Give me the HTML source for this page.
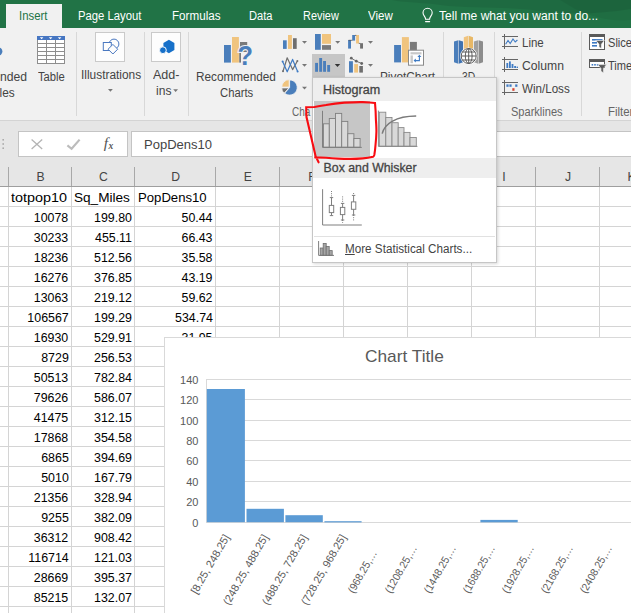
<!DOCTYPE html>
<html><head><meta charset="utf-8"><title>Excel Histogram</title>
<style>
html,body{margin:0;padding:0;}
body{width:631px;height:613px;overflow:hidden;position:relative;background:#fff;font-family:'Liberation Sans',sans-serif;}
#root{position:absolute;left:0;top:0;width:631px;height:613px;overflow:hidden;background:#fff;}
.t{position:absolute;white-space:nowrap;line-height:1;}
.abs{position:absolute;}
svg{position:absolute;left:0;top:0;overflow:visible;}
</style></head><body><div id="root">

<!-- ===== GRID ===== -->
<div id="grid" class="abs" style="left:0;top:0;width:631px;height:613px;">
  <div class="abs" style="left:0;top:121px;width:631px;height:65px;background:#e6e6e6;"></div>
  <svg width="631" height="613" shape-rendering="crispEdges">
    <!-- header separators -->
    <g fill="#a8a8a8">
      <rect x="8" y="167" width="1" height="19"/><rect x="71" y="167" width="1" height="19"/><rect x="134" y="167" width="1" height="19"/>
      <rect x="215" y="167" width="1" height="19"/><rect x="279" y="167" width="1" height="19"/><rect x="343" y="167" width="1" height="19"/>
      <rect x="407" y="167" width="1" height="19"/><rect x="471" y="167" width="1" height="19"/><rect x="535" y="167" width="1" height="19"/><rect x="599" y="167" width="1" height="19"/>
    </g>
    <rect x="0" y="186" width="631" height="1" fill="#9e9e9e"/>
    <!-- vertical grid lines -->
    <g fill="#d4d4d4">
      <rect x="8" y="187" width="1" height="426"/><rect x="71" y="187" width="1" height="426"/><rect x="134" y="187" width="1" height="426"/>
      <rect x="215" y="187" width="1" height="426"/><rect x="279" y="187" width="1" height="426"/><rect x="343" y="187" width="1" height="426"/>
      <rect x="407" y="187" width="1" height="426"/><rect x="471" y="187" width="1" height="426"/><rect x="535" y="187" width="1" height="426"/><rect x="599" y="187" width="1" height="426"/>
      <rect x="0" y="206" width="631" height="1"/><rect x="0" y="226" width="631" height="1"/><rect x="0" y="246" width="631" height="1"/><rect x="0" y="266" width="631" height="1"/><rect x="0" y="286" width="631" height="1"/><rect x="0" y="306" width="631" height="1"/><rect x="0" y="326" width="631" height="1"/><rect x="0" y="346" width="631" height="1"/><rect x="0" y="366" width="631" height="1"/><rect x="0" y="386" width="631" height="1"/><rect x="0" y="406" width="631" height="1"/><rect x="0" y="426" width="631" height="1"/><rect x="0" y="446" width="631" height="1"/><rect x="0" y="466" width="631" height="1"/><rect x="0" y="486" width="631" height="1"/><rect x="0" y="506" width="631" height="1"/><rect x="0" y="526" width="631" height="1"/><rect x="0" y="546" width="631" height="1"/><rect x="0" y="566" width="631" height="1"/><rect x="0" y="586" width="631" height="1"/><rect x="0" y="606" width="631" height="1"/>
    </g>
  </svg>
  <span class="t" style="font-size:12.2px;color:#444;left:-9.50px;width:100px;text-align:center;top:171.00px;">B</span>
<span class="t" style="font-size:12.2px;color:#444;left:53.50px;width:100px;text-align:center;top:171.00px;">C</span>
<span class="t" style="font-size:12.2px;color:#444;left:125.70px;width:100px;text-align:center;top:171.00px;">D</span>
<span class="t" style="font-size:12.2px;color:#444;left:197.80px;width:100px;text-align:center;top:171.00px;">E</span>
<span class="t" style="font-size:12.2px;color:#444;left:262.00px;width:100px;text-align:center;top:171.00px;">F</span>
<span class="t" style="font-size:12.2px;color:#444;left:326.00px;width:100px;text-align:center;top:171.00px;">G</span>
<span class="t" style="font-size:12.2px;color:#444;left:390.00px;width:100px;text-align:center;top:171.00px;">H</span>
<span class="t" style="font-size:12.2px;color:#444;left:454.00px;width:100px;text-align:center;top:171.00px;">I</span>
<span class="t" style="font-size:12.2px;color:#444;left:518.00px;width:100px;text-align:center;top:171.00px;">J</span>
<span class="t" style="font-size:12.2px;color:#444;left:581.70px;width:100px;text-align:center;top:171.00px;">K</span>
<span class="t" style="font-size:13.4px;color:#000;left:11.40px;top:191.00px;transform-origin:0 0;transform:scaleX(1.0731);">totpop10</span>
<span class="t" style="font-size:13.4px;color:#000;left:73.50px;top:191.00px;transform-origin:0 0;transform:scaleX(1.0145);">Sq_Miles</span>
<span class="t" style="font-size:13.4px;color:#000;left:137.70px;top:191.00px;transform-origin:0 0;transform:scaleX(0.9814);">PopDens10</span>
<span class="t" style="font-size:13.4px;color:#000;right:562.40px;top:211.00px;transform-origin:100% 0;transform:scaleX(0.9250);">10078</span>
<span class="t" style="font-size:13.4px;color:#000;right:499.20px;top:211.00px;transform-origin:100% 0;transform:scaleX(0.9250);">199.80</span>
<span class="t" style="font-size:13.4px;color:#000;right:418.00px;top:211.00px;transform-origin:100% 0;transform:scaleX(0.9250);">50.44</span>
<span class="t" style="font-size:13.4px;color:#000;right:562.40px;top:231.00px;transform-origin:100% 0;transform:scaleX(0.9250);">30233</span>
<span class="t" style="font-size:13.4px;color:#000;right:499.20px;top:231.00px;transform-origin:100% 0;transform:scaleX(0.9250);">455.11</span>
<span class="t" style="font-size:13.4px;color:#000;right:418.00px;top:231.00px;transform-origin:100% 0;transform:scaleX(0.9250);">66.43</span>
<span class="t" style="font-size:13.4px;color:#000;right:562.40px;top:251.00px;transform-origin:100% 0;transform:scaleX(0.9250);">18236</span>
<span class="t" style="font-size:13.4px;color:#000;right:499.20px;top:251.00px;transform-origin:100% 0;transform:scaleX(0.9250);">512.56</span>
<span class="t" style="font-size:13.4px;color:#000;right:418.00px;top:251.00px;transform-origin:100% 0;transform:scaleX(0.9250);">35.58</span>
<span class="t" style="font-size:13.4px;color:#000;right:562.40px;top:271.00px;transform-origin:100% 0;transform:scaleX(0.9250);">16276</span>
<span class="t" style="font-size:13.4px;color:#000;right:499.20px;top:271.00px;transform-origin:100% 0;transform:scaleX(0.9250);">376.85</span>
<span class="t" style="font-size:13.4px;color:#000;right:418.00px;top:271.00px;transform-origin:100% 0;transform:scaleX(0.9250);">43.19</span>
<span class="t" style="font-size:13.4px;color:#000;right:562.40px;top:291.00px;transform-origin:100% 0;transform:scaleX(0.9250);">13063</span>
<span class="t" style="font-size:13.4px;color:#000;right:499.20px;top:291.00px;transform-origin:100% 0;transform:scaleX(0.9250);">219.12</span>
<span class="t" style="font-size:13.4px;color:#000;right:418.00px;top:291.00px;transform-origin:100% 0;transform:scaleX(0.9250);">59.62</span>
<span class="t" style="font-size:13.4px;color:#000;right:562.40px;top:311.00px;transform-origin:100% 0;transform:scaleX(0.9250);">106567</span>
<span class="t" style="font-size:13.4px;color:#000;right:499.20px;top:311.00px;transform-origin:100% 0;transform:scaleX(0.9250);">199.29</span>
<span class="t" style="font-size:13.4px;color:#000;right:418.00px;top:311.00px;transform-origin:100% 0;transform:scaleX(0.9250);">534.74</span>
<span class="t" style="font-size:13.4px;color:#000;right:562.40px;top:331.00px;transform-origin:100% 0;transform:scaleX(0.9250);">16930</span>
<span class="t" style="font-size:13.4px;color:#000;right:499.20px;top:331.00px;transform-origin:100% 0;transform:scaleX(0.9250);">529.91</span>
<span class="t" style="font-size:13.4px;color:#000;right:418.00px;top:331.00px;transform-origin:100% 0;transform:scaleX(0.9250);">31.95</span>
<span class="t" style="font-size:13.4px;color:#000;right:562.40px;top:351.00px;transform-origin:100% 0;transform:scaleX(0.9250);">8729</span>
<span class="t" style="font-size:13.4px;color:#000;right:499.20px;top:351.00px;transform-origin:100% 0;transform:scaleX(0.9250);">256.53</span>
<span class="t" style="font-size:13.4px;color:#000;right:562.40px;top:371.00px;transform-origin:100% 0;transform:scaleX(0.9250);">50513</span>
<span class="t" style="font-size:13.4px;color:#000;right:499.20px;top:371.00px;transform-origin:100% 0;transform:scaleX(0.9250);">782.84</span>
<span class="t" style="font-size:13.4px;color:#000;right:562.40px;top:391.00px;transform-origin:100% 0;transform:scaleX(0.9250);">79626</span>
<span class="t" style="font-size:13.4px;color:#000;right:499.20px;top:391.00px;transform-origin:100% 0;transform:scaleX(0.9250);">586.07</span>
<span class="t" style="font-size:13.4px;color:#000;right:562.40px;top:411.00px;transform-origin:100% 0;transform:scaleX(0.9250);">41475</span>
<span class="t" style="font-size:13.4px;color:#000;right:499.20px;top:411.00px;transform-origin:100% 0;transform:scaleX(0.9250);">312.15</span>
<span class="t" style="font-size:13.4px;color:#000;right:562.40px;top:431.00px;transform-origin:100% 0;transform:scaleX(0.9250);">17868</span>
<span class="t" style="font-size:13.4px;color:#000;right:499.20px;top:431.00px;transform-origin:100% 0;transform:scaleX(0.9250);">354.58</span>
<span class="t" style="font-size:13.4px;color:#000;right:562.40px;top:451.00px;transform-origin:100% 0;transform:scaleX(0.9250);">6865</span>
<span class="t" style="font-size:13.4px;color:#000;right:499.20px;top:451.00px;transform-origin:100% 0;transform:scaleX(0.9250);">394.69</span>
<span class="t" style="font-size:13.4px;color:#000;right:562.40px;top:471.00px;transform-origin:100% 0;transform:scaleX(0.9250);">5010</span>
<span class="t" style="font-size:13.4px;color:#000;right:499.20px;top:471.00px;transform-origin:100% 0;transform:scaleX(0.9250);">167.79</span>
<span class="t" style="font-size:13.4px;color:#000;right:562.40px;top:491.00px;transform-origin:100% 0;transform:scaleX(0.9250);">21356</span>
<span class="t" style="font-size:13.4px;color:#000;right:499.20px;top:491.00px;transform-origin:100% 0;transform:scaleX(0.9250);">328.94</span>
<span class="t" style="font-size:13.4px;color:#000;right:562.40px;top:511.00px;transform-origin:100% 0;transform:scaleX(0.9250);">9255</span>
<span class="t" style="font-size:13.4px;color:#000;right:499.20px;top:511.00px;transform-origin:100% 0;transform:scaleX(0.9250);">382.09</span>
<span class="t" style="font-size:13.4px;color:#000;right:562.40px;top:531.00px;transform-origin:100% 0;transform:scaleX(0.9250);">36312</span>
<span class="t" style="font-size:13.4px;color:#000;right:499.20px;top:531.00px;transform-origin:100% 0;transform:scaleX(0.9250);">908.42</span>
<span class="t" style="font-size:13.4px;color:#000;right:562.40px;top:551.00px;transform-origin:100% 0;transform:scaleX(0.9250);">116714</span>
<span class="t" style="font-size:13.4px;color:#000;right:499.20px;top:551.00px;transform-origin:100% 0;transform:scaleX(0.9250);">121.03</span>
<span class="t" style="font-size:13.4px;color:#000;right:562.40px;top:571.00px;transform-origin:100% 0;transform:scaleX(0.9250);">28669</span>
<span class="t" style="font-size:13.4px;color:#000;right:499.20px;top:571.00px;transform-origin:100% 0;transform:scaleX(0.9250);">395.37</span>
<span class="t" style="font-size:13.4px;color:#000;right:562.40px;top:591.00px;transform-origin:100% 0;transform:scaleX(0.9250);">85215</span>
<span class="t" style="font-size:13.4px;color:#000;right:499.20px;top:591.00px;transform-origin:100% 0;transform:scaleX(0.9250);">132.07</span>
</div>

<!-- ===== TITLE BAR + RIBBON ===== -->
<div id="ribbon" class="abs" style="left:0;top:0;width:631px;height:157px;">
  <div class="abs" style="left:0;top:0;width:631px;height:28px;background:#217346;"></div>
  <svg width="631" height="28"><path d="M392 0 L631 0 L631 9 C600 14 570 15 540 11 C505 6 470 9 440 5 C420 2 405 3 392 0 Z" fill="#000" opacity="0.07"/><path d="M560 0 L631 0 L631 20 C610 22 590 16 575 9 Z" fill="#000" opacity="0.05"/></svg>
  <div class="abs" style="left:6px;top:4px;width:56px;height:24px;background:#f1f1f1;"></div>
  <div class="abs" style="left:0;top:28px;width:631px;height:92px;background:#f1f1f1;"></div>
  <div class="abs" style="left:0;top:120px;width:631px;height:1px;background:#d4d4d4;"></div>
  <!-- formula bar boxes -->
  <div class="abs" style="left:18px;top:131px;width:108px;height:24px;background:#fff;border:1px solid #c4c4c4;"></div>
  <div class="abs" style="left:131px;top:131px;width:520px;height:24px;background:#fff;border:1px solid #c4c4c4;"></div>
  <svg width="631" height="160" id="ribicons">
  <!-- group separators -->
  <g fill="#d8d8d8" shape-rendering="crispEdges">
    <rect x="76" y="32" width="1" height="84"/><rect x="144" y="32" width="1" height="84"/><rect x="188" y="32" width="1" height="84"/>
    <rect x="443" y="32" width="1" height="84"/><rect x="494" y="32" width="1" height="84"/><rect x="581" y="32" width="1" height="84"/>
  </g>
  <!-- lightbulb -->
  <g fill="none" stroke="#fff" stroke-width="1.1" stroke-linecap="round">
    <path d="M425.6 19.2 C425.6 16.6 423 15.6 423 12.8 A4.6 4.6 0 0 1 432.2 12.8 C432.2 15.6 429.6 16.6 429.6 19.2 Z"/>
    <path d="M425.6 21.6 H429.6" stroke-width="1.2"/>
  </g>
  <!-- left cut circle -->
  <circle cx="-1.8" cy="51.5" r="4.2" fill="#4a7ebb"/>
  <!-- Table icon -->
  <g shape-rendering="crispEdges">
    <rect x="37" y="36" width="28" height="28" fill="#fff"/>
    <g fill="#8e8e8e">
      <rect x="37" y="40" width="1" height="24"/><rect x="46" y="40" width="1" height="24"/><rect x="55" y="40" width="1" height="24"/><rect x="64" y="40" width="1" height="24"/>
      <rect x="37" y="43" width="28" height="1"/><rect x="37" y="47" width="28" height="1"/><rect x="37" y="51" width="28" height="1"/><rect x="37" y="55" width="28" height="1"/><rect x="37" y="59" width="28" height="1"/><rect x="37" y="63" width="28" height="1"/>
    </g>
    <rect x="37" y="36" width="28" height="4" fill="#4676c2"/>
  </g>
  <g fill="#fff"><path d="M39.8 37.2h3.6l-1.8 2z"/><path d="M48.8 37.2h3.6l-1.8 2z"/><path d="M57.8 37.2h3.6l-1.8 2z"/></g>
  <!-- Illustrations box -->
  <rect x="95.5" y="32.5" width="29" height="29" fill="#fdfdfd" stroke="#cacaca"/>
  <g fill="#fdfdfd" stroke="#4a78c0" stroke-width="1">
    <circle cx="114" cy="44" r="4.9"/>
    <rect x="103.3" y="42.5" width="8" height="8"/>
    <path d="M112.9 44.4 L117.7 49.2 L112.9 54 L108.1 49.2 Z"/>
  </g>
  <!-- Add-ins box -->
  <rect x="151.5" y="32.5" width="29" height="29" fill="#fdfdfd" stroke="#cacaca"/>
  <path d="M168.9 39.8 L174.4 43.1 L174.4 50 L168.9 53.3 L163.4 50 L163.4 43.1 Z" fill="#1670c9"/>
  <circle cx="162.9" cy="50.2" r="3.4" fill="#1670c9" stroke="#fdfdfd" stroke-width="1"/>
  <!-- Recommended charts -->
  <g>
    <rect x="224" y="45" width="6.9" height="17.6" fill="#4a7ebb"/>
    <rect x="232" y="37" width="6.9" height="25.6" fill="#f0c47e"/>
    <rect x="240" y="42" width="7.2" height="10" fill="#7a7a7a"/>
    <rect x="239.2" y="52" width="1.8" height="10.6" fill="#7a7a7a"/>
    <text x="237.6" y="65.3" font-family="'Liberation Sans',sans-serif" font-weight="bold" font-size="27.5" fill="#4a7ebb" stroke="#f1f1f1" stroke-width="2.2" paint-order="stroke" textLength="15.5" lengthAdjust="spacingAndGlyphs">?</text>
  </g>
  <!-- column icon -->
  <rect x="283" y="40.3" width="3.7" height="8.6" fill="#4a7ebb"/><rect x="288" y="35" width="3.9" height="13.9" fill="#f0c47e"/><rect x="293" y="38.2" width="3.7" height="10.7" fill="#6f6f6f"/>
  <!-- hierarchy icon -->
  <rect x="315" y="34" width="5.8" height="15.8" fill="#4a7ebb"/><rect x="322" y="34" width="9" height="9.8" fill="#f0c47e"/><rect x="322" y="45.1" width="9" height="4.7" fill="#7a7a7a"/>
  <!-- waterfall icon -->
  <rect x="348.1" y="40" width="2.9" height="8.6" fill="#4a7ebb"/><rect x="352.2" y="35" width="2.9" height="5.6" fill="#4a7ebb"/>
  <rect x="356.1" y="35" width="2.9" height="8.5" fill="#f0c47e"/><rect x="360.1" y="43.2" width="2.9" height="5.4" fill="#6f6f6f"/>
  <path d="M348.6 40.3 H352.4 M355 35.4 H356.3 M358.8 43.4 H360.3" stroke="#555" stroke-width="0.8" fill="none"/>
  <!-- line icon -->
  <g fill="none" stroke-width="1.2" stroke-linejoin="round">
    <path d="M283 71.2 L287.2 57.8 L292.6 69.6 L297.4 61" stroke="#6f6f6f"/>
    <path d="M282.6 61.6 L287.2 71.8 L292.6 59.4 L297.6 71.4" stroke="#3f7bc4"/>
  </g>
  <g fill="#6f6f6f"><circle cx="283" cy="71.2" r="1"/><circle cx="297.4" cy="61" r="1"/></g>
  <g fill="#3f7bc4"><circle cx="282.6" cy="61.6" r="1"/><circle cx="297.6" cy="71.4" r="1"/></g>
  <!-- selected histogram button -->
  <rect x="312" y="54" width="33" height="24" fill="#c6c6c6" shape-rendering="crispEdges"/>
  <g fill="#4a7ebb"><rect x="315.1" y="62.9" width="2.9" height="8.9"/><rect x="319.2" y="58" width="2.9" height="13.8"/><rect x="323.1" y="61" width="2.9" height="10.8"/><rect x="327.2" y="65" width="2.9" height="6.8"/></g>
  <!-- combo icon -->
  <rect x="349" y="61.2" width="3.9" height="11.4" fill="#4a7ebb"/><rect x="354.2" y="64.1" width="3.8" height="8.5" fill="#f0c47e"/><rect x="359.3" y="66" width="3.6" height="6.6" fill="#6f6f6f"/>
  <path d="M351.3 58.2 L356.3 61.2 L361.7 63.5" stroke="#666" stroke-width="0.9" fill="none"/>
  <g fill="#666"><circle cx="351.3" cy="58.2" r="1.4"/><circle cx="356.3" cy="61.2" r="1.4"/><circle cx="361.7" cy="63.5" r="1.4"/></g>
  <!-- pie icon -->
  <g stroke="#f1f1f1" stroke-width="0.9">
    <path d="M289.6 87.5 L289.6 79.9 A7.6 7.6 0 1 1 284.6 93.2 Z" fill="#4a7ebb"/>
    <path d="M289.2 87.1 L281.7 87.1 A7.6 7.6 0 0 1 289.2 79.6 Z" fill="#f0c47e"/>
    <path d="M289 87.9 L284 93.3 A7.6 7.6 0 0 1 281.7 87.9 Z" fill="#6f6f6f"/>
  </g>
  <!-- dropdown arrows -->
  <g fill="#777">
    <path d="M302 41h5l-2.5 2.7z"/><path d="M335.2 41h5l-2.5 2.7z"/><path d="M368 41h5l-2.5 2.7z"/>
    <path d="M302 64h5l-2.5 2.7z"/><path d="M368 64h5l-2.5 2.7z"/>
    <path d="M302 86.7h5l-2.5 2.7z"/>
    <path d="M108 88.9h4.8l-2.4 2.9z"/><path d="M173.2 89.2h4.8l-2.4 2.9z"/>
  </g>
  <path d="M334.8 64h5.4l-2.7 3z" fill="#333"/>
  <!-- PivotChart icon -->
  <rect x="394.1" y="45" width="6.9" height="17.4" fill="#4a7ebb"/><rect x="401.9" y="37.1" width="7" height="25.3" fill="#f0c47e"/><rect x="409.9" y="41.9" width="7" height="9" fill="#7a7a7a"/>
  <rect x="408.5" y="50.2" width="15" height="15" fill="#fff" stroke="#8a8a8a" stroke-width="1"/>
  <rect x="410.5" y="52.2" width="11" height="2.2" fill="#c8c8c8"/><rect x="410.5" y="55.4" width="2.4" height="7.8" fill="#c8c8c8"/>
  <g fill="none" stroke="#3f7bc4" stroke-width="1.1">
    <path d="M414.6 60.6 H419.4 V55.8"/>
  </g>
  <path d="M417.4 57 L419.4 54.8 L421.4 57 Z M415.8 58.6 L413.6 60.6 L415.8 62.6 Z" fill="#3f7bc4"/>
  <!-- 3D map icon -->
  <g>
    <path d="M454 41.6 L458.3 40.2 V63.7 L454 62.2 Z" fill="#4a7ebb"/><path d="M458.8 40.2 L463 41.6 V62.2 L458.8 63.7 Z" fill="#3f72b0"/>
    <path d="M463.8 37.2 L468.2 35.8 V56 L463.8 56 Z" fill="#f0c47e"/><path d="M468.7 35.8 L473 37.2 V56 L468.7 56 Z" fill="#e8b866"/>
    <path d="M473.9 41.6 L478.2 40.2 V63.7 L473.9 62.2 Z" fill="#a0a0a0"/><path d="M478.7 40.2 L483 41.6 V62.2 L478.7 63.7 Z" fill="#8c8c8c"/>
    <circle cx="468.7" cy="56" r="8.6" fill="#fff"/>
    <g fill="none" stroke="#555" stroke-width="0.95">
      <circle cx="468.7" cy="56" r="7.5"/>
      <ellipse cx="468.7" cy="56" rx="3.4" ry="7.4"/>
      <path d="M468.7 48.6 V63.4 M461.3 56 H476.1 M462.6 52 H474.8 M462.6 60 H474.8"/>
    </g>
  </g>
  <!-- sparkline icons -->
  <g fill="none" stroke="#666" stroke-width="1" shape-rendering="crispEdges">
    <path d="M504.5 34 V49 M502 36.5 H518 M502 46.5 H518"/>
    <path d="M504.5 57 V72 M502 59.5 H518 M502 69.5 H518"/>
    <path d="M504.5 80 V95 M502 82.5 H518 M502 92.5 H518"/>
  </g>
  <path d="M505.6 44.2 L508 40.4 L510.2 43.6 L513 39 L515.2 42 L517.4 40" fill="none" stroke="#3f7bc4" stroke-width="1.1"/>
  <g fill="#3f7bc4"><rect x="506.4" y="63" width="1.8" height="5"/><rect x="509" y="61.4" width="1.8" height="6.6"/><rect x="511.6" y="64" width="1.8" height="4"/><rect x="514.2" y="66" width="1.8" height="2"/><rect x="516.6" y="66.6" width="1.4" height="1.4"/></g>
  <g fill="#3f7bc4"><rect x="506.4" y="84.4" width="2.2" height="2.4"/><rect x="509.4" y="84.4" width="2.2" height="2.4"/><rect x="515.2" y="84.4" width="2.2" height="2.4"/></g>
  <rect x="512.3" y="88.2" width="2.2" height="2.6" fill="#d9432f"/>
  <!-- slicer icon -->
  <rect x="589.5" y="34.5" width="15" height="15" fill="#fff" stroke="#5a5a5a"/>
  <rect x="589" y="34" width="16" height="3" fill="#5a5a5a"/>
  <g fill="#3f7bc4"><rect x="592" y="39" width="10.5" height="1.6"/><rect x="592" y="42" width="5" height="1.6"/><rect x="592" y="45" width="5" height="1.6"/></g>
  <path d="M595.8 40.4 H604.4 L601.4 44.2 V48.6 L599 47 V44.2 Z" fill="#5a5a5a" stroke="#fff" stroke-width="0.6"/>
  <!-- timeline icon -->
  <rect x="589.5" y="59.5" width="15" height="8" fill="#fff" stroke="#5a5a5a"/>
  <rect x="589" y="59" width="16" height="3" fill="#5a5a5a"/>
  <g fill="#3f7bc4"><rect x="591.6" y="64" width="1.6" height="1.6"/><rect x="594.2" y="64" width="1.6" height="1.6"/><rect x="596.8" y="64" width="1.6" height="1.6"/></g>
  <path d="M597.8 64.6 H606.6 L603.4 68.4 V72.8 L601 71.2 V68.4 Z" fill="#5a5a5a" stroke="#f1f1f1" stroke-width="0.6"/>
  <!-- formula bar icons -->
  <g fill="#ababab"><rect x="2.4" y="139" width="1.6" height="1.6"/><rect x="2.4" y="143.2" width="1.6" height="1.6"/><rect x="2.4" y="147.4" width="1.6" height="1.6"/></g>
  <path d="M31.6 139.6 L42.2 149 M42.2 139.6 L31.6 149" stroke="#b4b4b4" stroke-width="1.3" fill="none"/>
  <path d="M67.4 145.4 L71.6 148.8 L79.6 139.6" stroke="#bcbcbc" stroke-width="2.2" fill="none"/>
  <text x="103.8" y="148.2" font-family="'Liberation Serif',serif" font-style="italic" font-size="15.5" fill="#555">f</text>
  <text x="108.6" y="148.6" font-family="'Liberation Serif',serif" font-style="italic" font-size="9.5" fill="#555" font-weight="bold">x</text>
</svg>

  <span class="t" style="font-size:12.3px;color:#217346;left:19.30px;top:10.00px;transform-origin:0 0;transform:scaleX(0.9226);">Insert</span>
<span class="t" style="font-size:12.3px;color:#fff;left:77.50px;top:10.00px;transform-origin:0 0;transform:scaleX(0.9186);">Page Layout</span>
<span class="t" style="font-size:12.3px;color:#fff;left:171.70px;top:10.00px;transform-origin:0 0;transform:scaleX(0.9471);">Formulas</span>
<span class="t" style="font-size:12.3px;color:#fff;left:249.30px;top:10.00px;transform-origin:0 0;transform:scaleX(0.9038);">Data</span>
<span class="t" style="font-size:12.3px;color:#fff;left:302.60px;top:10.00px;transform-origin:0 0;transform:scaleX(0.8878);">Review</span>
<span class="t" style="font-size:12.3px;color:#fff;left:367.70px;top:10.00px;transform-origin:0 0;transform:scaleX(0.9370);">View</span>
<span class="t" style="font-size:12.3px;color:#fff;left:439.20px;top:10.00px;transform-origin:0 0;transform:scaleX(0.9826);">Tell me what you want to do...</span>
  <span class="t" style="font-size:12.3px;color:#444;left:-0.50px;top:71.00px;transform-origin:0 0;transform:scaleX(0.9889);">nded</span>
<span class="t" style="font-size:12.3px;color:#444;left:-6.60px;top:87.00px;transform-origin:0 0;transform:scaleX(0.9609);">bles</span>
<span class="t" style="font-size:12.3px;color:#444;left:37.50px;top:71.00px;transform-origin:0 0;transform:scaleX(0.9138);">Table</span>
<span class="t" style="font-size:12.3px;color:#444;left:80.50px;top:69.00px;transform-origin:0 0;transform:scaleX(0.9677);">Illustrations</span>
<span class="t" style="font-size:12.3px;color:#444;left:153.00px;top:69.00px;transform-origin:0 0;transform:scaleX(1.0192);">Add-</span>
<span class="t" style="font-size:12.3px;color:#444;left:155.50px;top:85.00px;transform-origin:0 0;transform:scaleX(0.9812);">ins</span>
<span class="t" style="font-size:12.3px;color:#444;left:195.50px;top:71.00px;transform-origin:0 0;transform:scaleX(0.9578);">Recommended</span>
<span class="t" style="font-size:12.3px;color:#444;left:219.50px;top:87.00px;transform-origin:0 0;transform:scaleX(0.9167);">Charts</span>
<span class="t" style="font-size:12.3px;color:#666;left:291.60px;top:106.00px;transform-origin:0 0;transform:scaleX(0.8130);">Cha</span>
<span class="t" style="font-size:12.3px;color:#444;left:380.30px;top:71.00px;transform-origin:0 0;transform:scaleX(0.9586);">PivotChart</span>
<span class="t" style="font-size:12.3px;color:#444;left:462.10px;top:71.00px;transform-origin:0 0;transform:scaleX(0.8375);">3D</span>
<span class="t" style="font-size:12.3px;color:#444;left:521.70px;top:37.00px;transform-origin:0 0;transform:scaleX(0.9348);">Line</span>
<span class="t" style="font-size:12.3px;color:#444;left:521.70px;top:60.00px;transform-origin:0 0;transform:scaleX(0.9905);">Column</span>
<span class="t" style="font-size:12.3px;color:#444;left:521.70px;top:83.00px;transform-origin:0 0;transform:scaleX(0.9431);">Win/Loss</span>
<span class="t" style="font-size:12.3px;color:#666;left:511.20px;top:106.00px;transform-origin:0 0;transform:scaleX(0.8983);">Sparklines</span>
<span class="t" style="font-size:12.3px;color:#666;left:607.80px;top:106.00px;transform-origin:0 0;transform:scaleX(0.9300);">Filters</span>
<span class="t" style="font-size:12.3px;color:#444;left:608.40px;top:37.00px;transform-origin:0 0;transform:scaleX(0.9000);">Slicer</span>
<span class="t" style="font-size:12.3px;color:#444;left:608.40px;top:60.00px;transform-origin:0 0;transform:scaleX(0.9000);">Timeline</span>
<span class="t" style="font-size:13.4px;color:#444;left:143.80px;top:138.00px;transform-origin:0 0;transform:scaleX(0.9729);">PopDens10</span>
</div>

<!-- ===== CHART ===== -->
<div id="chart" class="abs" style="left:164px;top:337px;width:480px;height:290px;background:#fff;border:1px solid #d9d9d9;"></div>
<svg width="631" height="613" shape-rendering="crispEdges">
  <g fill="#d9d9d9">
    <rect x="206" y="379" width="425" height="1"/><rect x="206" y="399" width="425" height="1"/><rect x="206" y="420" width="425" height="1"/>
    <rect x="206" y="440" width="425" height="1"/><rect x="206" y="460" width="425" height="1"/><rect x="206" y="481" width="425" height="1"/>
    <rect x="206" y="501" width="425" height="1"/><rect x="206" y="522" width="425" height="1"/><rect x="206" y="379" width="1" height="143"/>
  </g>
  <g fill="#5b9bd5" shape-rendering="geometricPrecision">
    <rect x="206.8" y="389" width="38.1" height="133.2"/>
    <rect x="246.5" y="508.8" width="37.4" height="13.4"/>
    <rect x="285.4" y="515.2" width="37.4" height="7"/>
    <rect x="324.4" y="521.2" width="37.2" height="1.2"/>
    <rect x="480.4" y="519.9" width="37.3" height="2.4"/>
  </g>
</svg>
<div class="abs" style="left:0;top:0;width:631px;height:613px;"><span class="t" style="font-size:17px;color:#595959;left:364.70px;top:348.00px;transform-origin:0 0;transform:scaleX(1.0169);">Chart Title</span>
<span class="t" style="font-size:11px;color:#595959;right:432.60px;top:375.00px;">140</span>
<span class="t" style="font-size:11px;color:#595959;right:432.60px;top:395.00px;">120</span>
<span class="t" style="font-size:11px;color:#595959;right:432.60px;top:416.00px;">100</span>
<span class="t" style="font-size:11px;color:#595959;right:432.60px;top:436.00px;">80</span>
<span class="t" style="font-size:11px;color:#595959;right:432.60px;top:456.00px;">60</span>
<span class="t" style="font-size:11px;color:#595959;right:432.60px;top:477.00px;">40</span>
<span class="t" style="font-size:11px;color:#595959;right:432.60px;top:497.00px;">20</span>
<span class="t" style="font-size:11px;color:#595959;right:432.60px;top:518.00px;">0</span>
<span class="t" style="font-size:10.8px;color:#595959;right:401.30px;top:528.00px;transform-origin:100% 9.00px;transform:rotate(-60deg) scaleX(1.010);">[8.25, 248.25]</span>
<span class="t" style="font-size:10.8px;color:#595959;right:362.30px;top:528.00px;transform-origin:100% 9.00px;transform:rotate(-60deg) scaleX(1.010);">(248.25, 488.25]</span>
<span class="t" style="font-size:10.8px;color:#595959;right:323.40px;top:528.00px;transform-origin:100% 9.00px;transform:rotate(-60deg) scaleX(1.010);">(488.25, 728.25]</span>
<span class="t" style="font-size:10.8px;color:#595959;right:284.50px;top:528.00px;transform-origin:100% 9.00px;transform:rotate(-60deg) scaleX(1.010);">(728.25, 968.25]</span>
<span class="t" style="font-size:10.8px;color:#595959;right:253.30px;top:544.00px;transform-origin:100% 9.00px;transform:rotate(-60deg) scaleX(0.940);">(968.25,…</span>
<span class="t" style="font-size:10.8px;color:#595959;right:213.30px;top:539.00px;transform-origin:100% 9.00px;transform:rotate(-60deg) scaleX(0.943);">(1208.25,…</span>
<span class="t" style="font-size:10.8px;color:#595959;right:174.50px;top:539.00px;transform-origin:100% 9.00px;transform:rotate(-60deg) scaleX(0.943);">(1448.25,…</span>
<span class="t" style="font-size:10.8px;color:#595959;right:135.60px;top:539.00px;transform-origin:100% 9.00px;transform:rotate(-60deg) scaleX(0.943);">(1688.25,…</span>
<span class="t" style="font-size:10.8px;color:#595959;right:96.40px;top:539.00px;transform-origin:100% 9.00px;transform:rotate(-60deg) scaleX(0.943);">(1928.25,…</span>
<span class="t" style="font-size:10.8px;color:#595959;right:57.70px;top:539.00px;transform-origin:100% 9.00px;transform:rotate(-60deg) scaleX(0.943);">(2168.25,…</span>
<span class="t" style="font-size:10.8px;color:#595959;right:18.70px;top:539.00px;transform-origin:100% 9.00px;transform:rotate(-60deg) scaleX(0.943);">(2408.25,…</span></div>

<!-- ===== MENU ===== -->
<div id="menu" class="abs" style="left:312px;top:77px;width:183px;height:184px;background:#fff;border:1px solid #c6c6c6;box-shadow:1px 1px 3px rgba(0,0,0,0.16);">
  <div class="abs" style="left:0;top:0;width:183px;height:23px;background:#eeeeee;"></div>
  <div class="abs" style="left:1px;top:23px;width:56px;height:56px;background:#c6c6c6;"></div>
  <div class="abs" style="left:0;top:80px;width:183px;height:20px;background:#eeeeee;"></div>
  <div class="abs" style="left:1px;top:158px;width:181px;height:1px;background:#e1e1e1;"></div>
</div>
<svg width="631" height="613" id="menuicons">
  <!-- histogram icon -->
  <g fill="#d9d9d9" stroke="#7f7f7f" stroke-width="0.9">
    <rect x="323.4" y="123.8" width="5.9" height="23.4"/><rect x="329.3" y="118.5" width="6.2" height="28.7"/><rect x="335.5" y="113.4" width="6.2" height="33.8"/>
    <rect x="341.7" y="121.4" width="6.1" height="25.8"/><rect x="347.8" y="133.7" width="6.1" height="13.5"/><rect x="353.9" y="138.5" width="6.2" height="8.7"/>
  </g>
  <path d="M322.5 110.8 V147.4 H361.8" fill="none" stroke="#7f7f7f" stroke-width="1"/>
  <!-- pareto icon -->
  <g fill="#d9d9d9" stroke="#8a8a8a" stroke-width="0.9">
    <rect x="379.3" y="112.2" width="6.5" height="34"/><rect x="385.8" y="117.5" width="6.2" height="28.7"/><rect x="392" y="122.7" width="6.2" height="23.5"/>
    <rect x="398.2" y="127.6" width="5.8" height="18.6"/><rect x="404" y="132.4" width="6" height="13.8"/><rect x="410" y="137.5" width="6.3" height="8.7"/>
  </g>
  <path d="M378.4 110.6 V146.4 H417.4" fill="none" stroke="#8a8a8a" stroke-width="1"/>
  <path d="M382.2 133.6 C384.6 123.4 396 116.2 416.2 116" fill="none" stroke="#7a7a7a" stroke-width="1.5"/>
  <!-- box & whisker icon -->
  <path d="M322.6 189.2 V225 H361.8" fill="none" stroke="#7f7f7f" stroke-width="1"/>
  <g stroke="#7f7f7f" stroke-width="1" fill="#fff">
    <path d="M331.5 191 V197.6" stroke-dasharray="1 1.2"/><path d="M331.5 197.6 V215.6 M329.8 197.6 H333.2 M329.8 215.6 H333.2"/><rect x="329.3" y="205.4" width="4.4" height="7.2"/>
    <path d="M342.6 196.4 V203.4 M342.6 220 V223" stroke-dasharray="1 1.2"/><path d="M342.6 203.4 V220 M340.9 203.4 H344.3 M340.9 220 H344.3"/><rect x="340.4" y="207.4" width="4.4" height="7.2"/>
    <path d="M353.6 193 V195.4 M353.6 215 V220.6" stroke-dasharray="1 1.2"/><path d="M353.6 195.4 V215 M351.9 195.4 H355.3 M351.9 215 H355.3"/><rect x="351.4" y="201.9" width="4.4" height="7.4"/>
  </g>
  <!-- more stat charts icon -->
  <path d="M318.6 241 V255.4 H334" fill="none" stroke="#7f7f7f" stroke-width="1"/>
  <g fill="#a6a6a6" stroke="#6f6f6f" stroke-width="0.8">
    <rect x="320.2" y="248" width="3" height="7.2"/><rect x="323.2" y="243.4" width="3" height="11.8"/><rect x="326.2" y="246.4" width="3" height="8.8"/><rect x="329.2" y="250.6" width="3" height="4.6"/>
  </g>
</svg>

<div class="abs" style="left:0;top:0;width:631px;height:613px;"><span class="t" style="font-size:12.3px;color:#444;-webkit-text-stroke:0.3px #444;left:323.40px;top:84.00px;transform-origin:0 0;transform:scaleX(1.0196);">Histogram</span>
<span class="t" style="font-size:12.3px;color:#444;-webkit-text-stroke:0.3px #444;left:323.60px;top:162.00px;">Box and Whisker</span>
<span class="t" style="font-size:12.3px;color:#444;left:345.10px;top:243.00px;transform-origin:0 0;transform:scaleX(0.9496);"><u>M</u>ore Statistical Charts...</span></div>

<!-- ===== RED ANNOTATION ===== -->
<svg width="631" height="613">
  <path d="M318.6 162.3 L315.6 156.2 L306.5 117 L306.2 107.3 L314.5 107 C320 106.3 323 105.5 326 105 C332 103.8 338 103 344.4 102.6 C352 102.2 358 102 362.7 102.1 C368 102.3 372 102.6 375 103 C375.5 108 375.8 114 375.9 119.5 C376.2 124 376.5 128 376.4 131.7 C376.3 136 376 140 375.6 144 C375.3 148 374.9 152 374.3 155 C374 156 373.6 156.6 373.1 156.8 C370 157.6 366 158.2 362.7 158.4 C358 158.8 354 158.9 350.5 158.9 C346 158.9 342 158.8 338.2 158.6 C334 158.4 330 158.1 326 157.7 C322 157.4 318 157.4 315.2 157.4" fill="none" stroke="#f80c12" stroke-width="2.1" stroke-linecap="round" stroke-linejoin="miter"/>
</svg>

</div></body></html>
